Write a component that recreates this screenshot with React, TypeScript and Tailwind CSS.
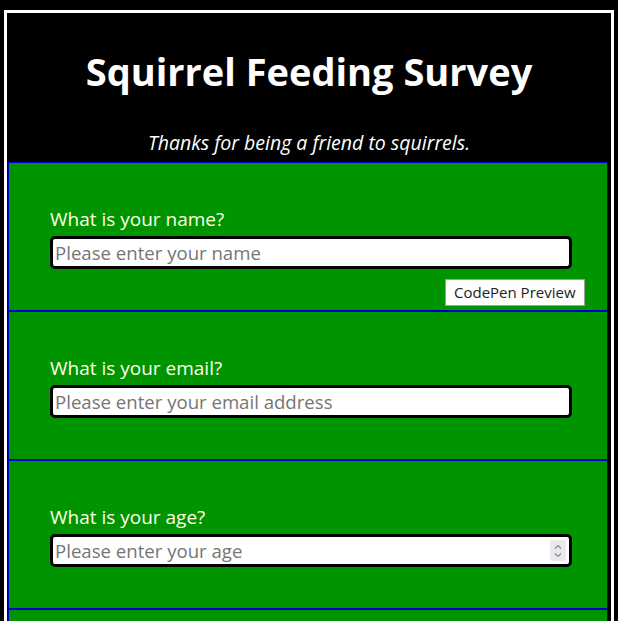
import React from "react";

function Field({ label, placeholder, number }: { label: string; placeholder: string; number?: boolean }) {
  return (
    <div className="relative h-[149px] w-[600px] ml-[1px] border border-[#0000cd] bg-[#009400] pt-[44px] pl-[41px]">
      <div className="text-[19px] leading-[24px] text-[#ffffe8]">{label}</div>
      <div className="relative mt-[5px] w-[522px]">
        <input
          type="text"
          readOnly
          placeholder={placeholder}
          className="block h-[33px] w-[522px] rounded-[5px] border-[3px] border-black bg-white px-[2px] text-[18.6px] text-black placeholder:text-[#757575] outline-none"
          style={{ fontFamily: "'Open Sans', sans-serif" }}
        />
        {number && (
          <div className="absolute right-[6px] top-[6px] flex h-[21px] w-[16px] flex-col items-center justify-center rounded-[2px] bg-[#e9e9ed]">
            <svg width="10" height="16" viewBox="0 0 10 16" fill="none" stroke="#8a8a8a" strokeWidth="1.2">
              <path d="M2 5.5 L5 2.5 L8 5.5" />
              <path d="M2 10.5 L5 13.5 L8 10.5" />
            </svg>
          </div>
        )}
      </div>
    </div>
  );
}

export default function App() {
  return (
    <div className="min-h-[621px] w-[618px] overflow-hidden bg-black pl-[4px] pt-[10px]" style={{ fontFamily: "'Open Sans', sans-serif" }}>
      <div className="h-[640px] w-[610px] border-[3px] border-b-0 border-white">
        <div className="flex h-[149px] flex-col items-center pt-[33px] text-white">
          <h1 className="text-[38px] font-bold leading-[50px]">Squirrel Feeding Survey</h1>
          <p className="mt-[34px] text-[19.5px] italic leading-[26px]">Thanks for being a friend to squirrels.</p>
        </div>
        <div className="relative">
          <Field label="What is your name?" placeholder="Please enter your name" />
          <div className="absolute left-[438px] top-[117px] border border-[#a0a0a0] bg-white px-[8px] text-[15px] leading-[25px] text-[#222]">
            CodePen Preview
          </div>
          <Field label="What is your email?" placeholder="Please enter your email address" />
          <Field label="What is your age?" placeholder="Please enter your age" number />
          <Field label="" placeholder="" />
        </div>
      </div>
    </div>
  );
}
